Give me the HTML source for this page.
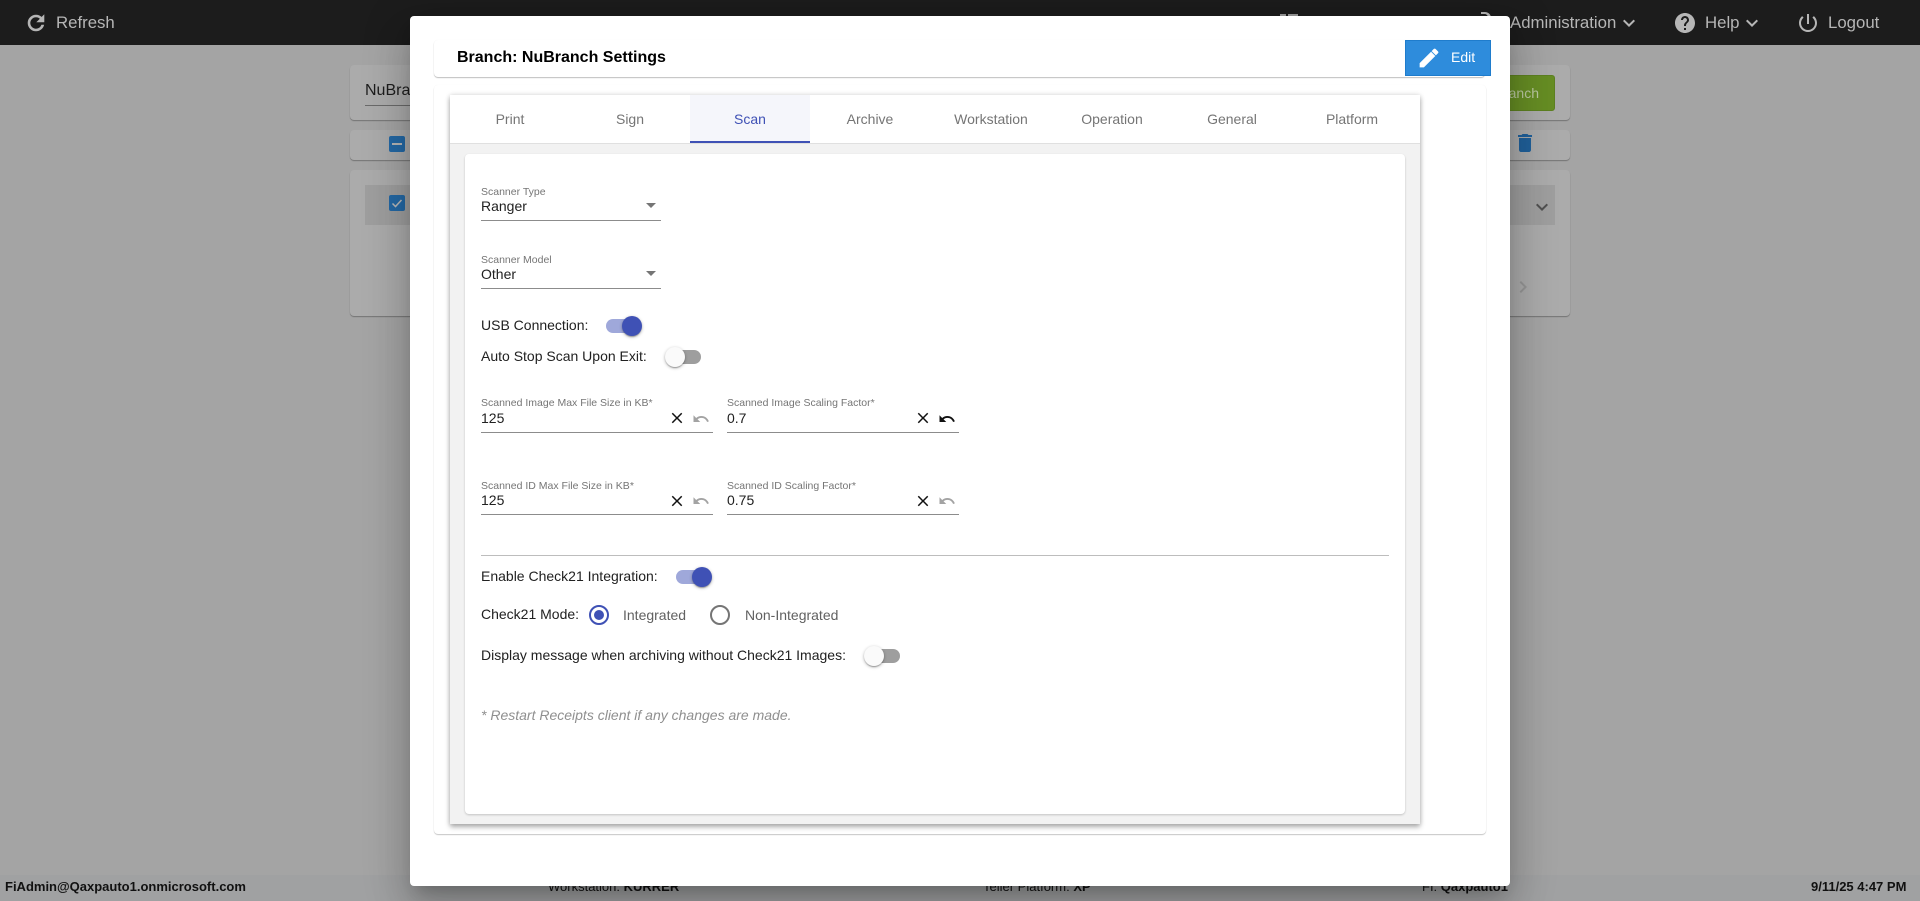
<!DOCTYPE html>
<html><head><meta charset="utf-8"><title>Branch Settings</title>
<style>
*{box-sizing:border-box}
html,body{margin:0;padding:0;width:1920px;height:901px;overflow:hidden;background:#a4a4a4;font-family:"Liberation Sans",Arial,sans-serif;color:#212121}
.a{position:absolute;white-space:nowrap}
.t{position:absolute;white-space:nowrap;line-height:20px;height:20px}
svg{position:absolute;display:block}
.bc{position:absolute;left:350px;width:1220px;background:#ababab;border-radius:4px;box-shadow:0 1px 1px rgba(0,0,0,.3)}
.nav{color:#b6b6b6;font-size:16.8px}
.lab{font-size:10.5px;color:#757575}
.val{font-size:14px;color:#212121}
.txt{font-size:14px;color:#212121}
.ul{position:absolute;height:1px;background:#8c8c8c}
.tab{position:absolute;top:95px;width:120px;height:48px;text-align:center;line-height:48px;font-size:14px;color:#757575}
.foot{font-size:13px;color:#111}
.trk{position:absolute;width:34px;height:14px;border-radius:7px}
.th{position:absolute;width:20px;height:20px;border-radius:50%;box-shadow:0 1px 3px rgba(0,0,0,.3),0 1px 1px rgba(0,0,0,.14),0 2px 1px -1px rgba(0,0,0,.12)}
</style></head>
<body>
<!-- top bar -->
<div class="a" style="left:0;top:0;width:1920px;height:45px;background:#1c1c1c"></div>
<svg style="left:24px;top:11px" width="24" height="24" viewBox="0 0 24 24" fill="#b6b6b6" stroke="#b6b6b6" stroke-width=".6"><path d="M17.65 6.35C16.2 4.9 14.21 4 12 4c-4.42 0-7.99 3.58-7.99 8s3.57 8 7.99 8c3.73 0 6.84-2.55 7.73-6h-2.08c-.82 2.33-3.04 4-5.65 4-3.31 0-6-2.69-6-6s2.69-6 6-6c1.66 0 3.14.69 4.22 1.78L13 11h7V4l-2.35 2.35z"/></svg>
<div class="t nav" style="left:56px;top:13px">Refresh</div>
<div class="a" style="left:1280px;top:14px;width:6px;height:3px;background:#9a9a9a"></div>
<div class="a" style="left:1288px;top:14px;width:10px;height:3px;background:#9a9a9a"></div>
<div class="a" style="left:1481px;top:12px;width:10px;height:6px;border-top:2px solid #b6b6b6;border-right:3px solid #b6b6b6;border-radius:0 8px 0 0"></div>
<div class="t nav" style="left:1510px;top:13px">Administration</div>
<svg style="left:1617px;top:11px" width="24" height="24" viewBox="0 0 24 24" fill="#b6b6b6"><path d="M16.59 8.59L12 13.17 7.41 8.59 6 10l6 6 6-6z"/></svg>
<svg style="left:1673px;top:11px" width="24" height="24" viewBox="0 0 24 24" fill="#b6b6b6"><path d="M12 2C6.48 2 2 6.48 2 12s4.48 10 10 10 10-4.48 10-10S17.52 2 12 2zm1 17h-2v-2h2v2zm2.07-7.75l-.9.92C13.45 12.9 13 13.5 13 15h-2v-.5c0-1.1.45-2.1 1.17-2.83l1.24-1.26c.37-.36.59-.86.59-1.41 0-1.1-.9-2-2-2s-2 .9-2 2H8c0-2.21 1.79-4 4-4s4 1.79 4 4c0 .88-.36 1.68-.93 2.25z"/></svg>
<div class="t nav" style="left:1705px;top:13px">Help</div>
<svg style="left:1740px;top:11px" width="24" height="24" viewBox="0 0 24 24" fill="#b6b6b6"><path d="M16.59 8.59L12 13.17 7.41 8.59 6 10l6 6 6-6z"/></svg>
<svg style="left:1796px;top:11px" width="24" height="24" viewBox="0 0 24 24" fill="#b6b6b6"><path d="M13 3h-2v10h2V3zm4.83 2.17l-1.42 1.42C17.99 7.86 19 9.81 19 12c0 3.87-3.13 7-7 7s-7-3.13-7-7c0-2.19 1.01-4.14 2.58-5.42L6.17 5.17C4.23 6.82 3 9.26 3 12c0 4.97 4.03 9 9 9s9-4.03 9-9c0-2.74-1.23-5.18-3.17-6.83z"/></svg>
<div class="t nav" style="left:1828px;top:13px">Logout</div>

<!-- background cards -->
<div class="bc" style="top:65px;height:55px"></div>
<div class="bc" style="top:130px;height:30px"></div>
<div class="bc" style="top:170px;height:146px"></div>
<div class="a" style="left:365px;top:185px;width:1190px;height:40px;background:#9e9e9e"></div>
<div class="t" style="left:365px;top:81px;font-size:16px;color:#1d1d1d">NuBranch</div>
<div class="a" style="left:365px;top:105px;width:200px;height:1px;background:#6a6a6a"></div>
<div class="a" style="left:389px;top:136px;width:16px;height:16px;background:#2468a4;border-radius:2px"></div>
<div class="a" style="left:392px;top:143px;width:10px;height:2px;background:#b5b5b5"></div>
<div class="a" style="left:389px;top:195px;width:16px;height:16px;background:#2468a4;border-radius:2px"></div>
<svg style="left:389px;top:195px" width="16" height="16" viewBox="0 0 16 16"><path d="M3.5 8.5l3 3 6-6.5" fill="none" stroke="#b8b8b8" stroke-width="1.5"/></svg>
<div class="a" style="left:1455px;top:75px;width:100px;height:36px;background:#668d24;border-radius:3px;border:1px solid #5d8021"></div>
<div class="t" style="left:1400px;top:83px;width:139px;text-align:right;font-size:14px;color:#b9c7a0">Add Branch</div>
<svg style="left:1513px;top:131px" width="24" height="24" viewBox="0 0 24 24" fill="#20609a"><path d="M6 19c0 1.1.9 2 2 2h8c1.1 0 2-.9 2-2V7H6v12zM19 4h-3.5l-1-1h-5l-1 1H5v2h14V4z"/></svg>
<svg style="left:1530px;top:195px" width="24" height="24" viewBox="0 0 24 24" fill="#505050"><path d="M16.59 8.59L12 13.17 7.41 8.59 6 10l6 6 6-6z"/></svg>
<svg style="left:1511px;top:275px" width="24" height="24" viewBox="0 0 24 24" fill="#959595"><path d="M10 6L8.59 7.41 13.17 12l-4.58 4.59L10 18l6-6z"/></svg>

<!-- footer -->
<div class="a" style="left:0;top:875px;width:1920px;height:26px;background:#a0a1a2"></div>
<div class="t foot" style="left:5px;top:877px;font-weight:bold">FiAdmin@Qaxpauto1.onmicrosoft.com</div>
<div class="t foot" style="left:548px;top:877px">Workstation: <b>KURRER</b></div>
<div class="t foot" style="left:983px;top:877px">Teller Platform: <b>XP</b></div>
<div class="t foot" style="left:1422px;top:877px">FI: <b>Qaxpauto1</b></div>
<div class="t foot" style="left:1811px;top:877px;width:95px;text-align:right;font-weight:bold">9/11/25 4:47 PM</div>

<!-- modal -->
<div class="a" style="left:410px;top:16px;width:1100px;height:870px;background:#fff;border-radius:4px;box-shadow:0 11px 15px -7px rgba(0,0,0,.2),0 24px 38px 3px rgba(0,0,0,.14),0 9px 46px 8px rgba(0,0,0,.12)"></div>
<div class="a" style="left:434px;top:40px;width:1051px;height:37px;background:#fff;border-radius:4px;box-shadow:0 1px 1px rgba(0,0,0,.25),0 0 1px rgba(0,0,0,.06)"></div>
<div class="t" style="left:457px;top:48px;font-size:16px;font-weight:bold;color:#000">Branch: NuBranch Settings</div>
<div class="a" style="left:1405px;top:40px;width:86px;height:36px;background:#2e8cdc;border:1px solid #1f7ccc"></div>
<svg style="left:1417px;top:46px" width="24" height="24" viewBox="0 0 24 24" fill="#fff" stroke="#fff" stroke-width=".7"><path d="M3 17.25V21h3.75L17.81 9.94l-3.75-3.75L3 17.25zM20.71 7.04c.39-.39.39-1.02 0-1.41l-2.34-2.34c-.39-.39-1.02-.39-1.41 0l-1.83 1.83 3.75 3.75 1.83-1.83z"/></svg>
<div class="t" style="left:1451px;top:47px;font-size:14px;color:#fff">Edit</div>

<div class="a" style="left:434px;top:85px;width:1052px;height:749px;background:#fff;border-radius:4px;box-shadow:0 1px 1px rgba(0,0,0,.22),0 0 1px rgba(0,0,0,.05)"></div>
<div class="a" style="left:450px;top:95px;width:970px;height:729px;background:#f2f2f2;box-shadow:0 3px 5px rgba(0,0,0,.3),0 0 5px rgba(0,0,0,.14)"></div>
<div class="a" style="left:450px;top:95px;width:970px;height:49px;background:#fff;border-bottom:1px solid #e0e0e0"></div>
<div class="a" style="left:690px;top:95px;width:120px;height:48px;background:#f5f6fb;border-bottom:2px solid #3f51b5"></div>
<div class="tab" style="left:450px">Print</div>
<div class="tab" style="left:570px">Sign</div>
<div class="tab" style="left:690px;color:#3f51b5">Scan</div>
<div class="tab" style="left:810px">Archive</div>
<div class="tab" style="left:931px">Workstation</div>
<div class="tab" style="left:1052px">Operation</div>
<div class="tab" style="left:1172px">General</div>
<div class="tab" style="left:1292px">Platform</div>

<div class="a" style="left:465px;top:154px;width:940px;height:660px;background:#fff;border-radius:4px;box-shadow:0 1px 2px rgba(0,0,0,.2)"></div>

<!-- scanner selects -->
<div class="t lab" style="left:481px;top:182px">Scanner Type</div>
<div class="t val" style="left:481px;top:196px">Ranger</div>
<div class="ul" style="left:481px;top:220px;width:180px"></div>
<svg style="left:646px;top:203px" width="10" height="5" viewBox="0 0 10 5" fill="#757575"><path d="M0 0h10L5 5z"/></svg>
<div class="t lab" style="left:481px;top:250px">Scanner Model</div>
<div class="t val" style="left:481px;top:264px">Other</div>
<div class="ul" style="left:481px;top:288px;width:180px"></div>
<svg style="left:646px;top:271px" width="10" height="5" viewBox="0 0 10 5" fill="#757575"><path d="M0 0h10L5 5z"/></svg>

<!-- toggles -->
<div class="t txt" style="left:481px;top:315px">USB Connection:</div>
<div class="trk" style="left:606px;top:319px;background:#9fa8da"></div>
<div class="th" style="left:622px;top:316px;background:#3f51b5"></div>
<div class="t txt" style="left:481px;top:346px">Auto Stop Scan Upon Exit:</div>
<div class="trk" style="left:667px;top:350px;background:#9e9e9e"></div>
<div class="th" style="left:665px;top:347px;background:#fafafa"></div>

<!-- inputs -->
<div class="t lab" style="left:481px;top:393px">Scanned Image Max File Size in KB*</div>
<div class="t val" style="left:481px;top:408px">125</div>
<div class="ul" style="left:481px;top:432px;width:232px"></div>
<div class="t lab" style="left:727px;top:393px">Scanned Image Scaling Factor*</div>
<div class="t val" style="left:727px;top:408px">0.7</div>
<div class="ul" style="left:727px;top:432px;width:232px"></div>
<div class="t lab" style="left:481px;top:476px">Scanned ID Max File Size in KB*</div>
<div class="t val" style="left:481px;top:490px">125</div>
<div class="ul" style="left:481px;top:514px;width:232px"></div>
<div class="t lab" style="left:727px;top:476px">Scanned ID Scaling Factor*</div>
<div class="t val" style="left:727px;top:490px">0.75</div>
<div class="ul" style="left:727px;top:514px;width:232px"></div>

<svg style="left:668px;top:409px" width="18" height="18" viewBox="0 0 24 24" fill="#111"><path d="M19 6.41L17.59 5 12 10.59 6.41 5 5 6.41 10.59 12 5 17.59 6.41 19 12 13.41 17.59 19 19 17.59 13.41 12z"/></svg>
<svg style="left:914px;top:409px" width="18" height="18" viewBox="0 0 24 24" fill="#111"><path d="M19 6.41L17.59 5 12 10.59 6.41 5 5 6.41 10.59 12 5 17.59 6.41 19 12 13.41 17.59 19 19 17.59 13.41 12z"/></svg>
<svg style="left:668px;top:492px" width="18" height="18" viewBox="0 0 24 24" fill="#111"><path d="M19 6.41L17.59 5 12 10.59 6.41 5 5 6.41 10.59 12 5 17.59 6.41 19 12 13.41 17.59 19 19 17.59 13.41 12z"/></svg>
<svg style="left:914px;top:492px" width="18" height="18" viewBox="0 0 24 24" fill="#111"><path d="M19 6.41L17.59 5 12 10.59 6.41 5 5 6.41 10.59 12 5 17.59 6.41 19 12 13.41 17.59 19 19 17.59 13.41 12z"/></svg>
<svg style="left:692px;top:410px" width="18" height="18" viewBox="0 0 24 24" fill="#a3a3a3"><path d="M12.5 8c-2.65 0-5.05.99-6.9 2.6L2 7v9h9l-3.62-3.62c1.39-1.16 3.16-1.88 5.12-1.88 3.54 0 6.55 2.31 7.6 5.5l2.37-.78C21.08 11.03 17.15 8 12.5 8z"/></svg>
<svg style="left:938px;top:410px" width="18" height="18" viewBox="0 0 24 24" fill="#111"><path d="M12.5 8c-2.65 0-5.05.99-6.9 2.6L2 7v9h9l-3.62-3.62c1.39-1.16 3.16-1.88 5.12-1.88 3.54 0 6.55 2.31 7.6 5.5l2.37-.78C21.08 11.03 17.15 8 12.5 8z"/></svg>
<svg style="left:692px;top:492px" width="18" height="18" viewBox="0 0 24 24" fill="#a3a3a3"><path d="M12.5 8c-2.65 0-5.05.99-6.9 2.6L2 7v9h9l-3.62-3.62c1.39-1.16 3.16-1.88 5.12-1.88 3.54 0 6.55 2.31 7.6 5.5l2.37-.78C21.08 11.03 17.15 8 12.5 8z"/></svg>
<svg style="left:938px;top:492px" width="18" height="18" viewBox="0 0 24 24" fill="#a3a3a3"><path d="M12.5 8c-2.65 0-5.05.99-6.9 2.6L2 7v9h9l-3.62-3.62c1.39-1.16 3.16-1.88 5.12-1.88 3.54 0 6.55 2.31 7.6 5.5l2.37-.78C21.08 11.03 17.15 8 12.5 8z"/></svg>

<div class="a" style="left:481px;top:555px;width:908px;height:1px;background:#bdbdbd"></div>

<div class="t txt" style="left:481px;top:566px">Enable Check21 Integration:</div>
<div class="trk" style="left:676px;top:570px;background:#9fa8da"></div>
<div class="th" style="left:692px;top:567px;background:#3f51b5"></div>

<div class="t txt" style="left:481px;top:604px">Check21 Mode:</div>
<svg style="left:587px;top:603px" width="24" height="24" viewBox="0 0 24 24"><circle cx="12" cy="12" r="9" fill="none" stroke="#3f51b5" stroke-width="2"/><circle cx="12" cy="12" r="5" fill="#3f51b5"/></svg>
<div class="t" style="left:623px;top:605px;font-size:14px;color:#616161">Integrated</div>
<svg style="left:708px;top:603px" width="24" height="24" viewBox="0 0 24 24"><circle cx="12" cy="12" r="9" fill="none" stroke="#757575" stroke-width="2"/></svg>
<div class="t" style="left:745px;top:605px;font-size:14px;color:#616161">Non-Integrated</div>

<div class="t txt" style="left:481px;top:645px">Display message when archiving without Check21 Images:</div>
<div class="trk" style="left:866px;top:649px;background:#9e9e9e"></div>
<div class="th" style="left:864px;top:646px;background:#fafafa"></div>

<div class="t" style="left:481px;top:705px;font-size:14px;font-style:italic;color:#8f8f8f">* Restart Receipts client if any changes are made.</div>
</body></html>
